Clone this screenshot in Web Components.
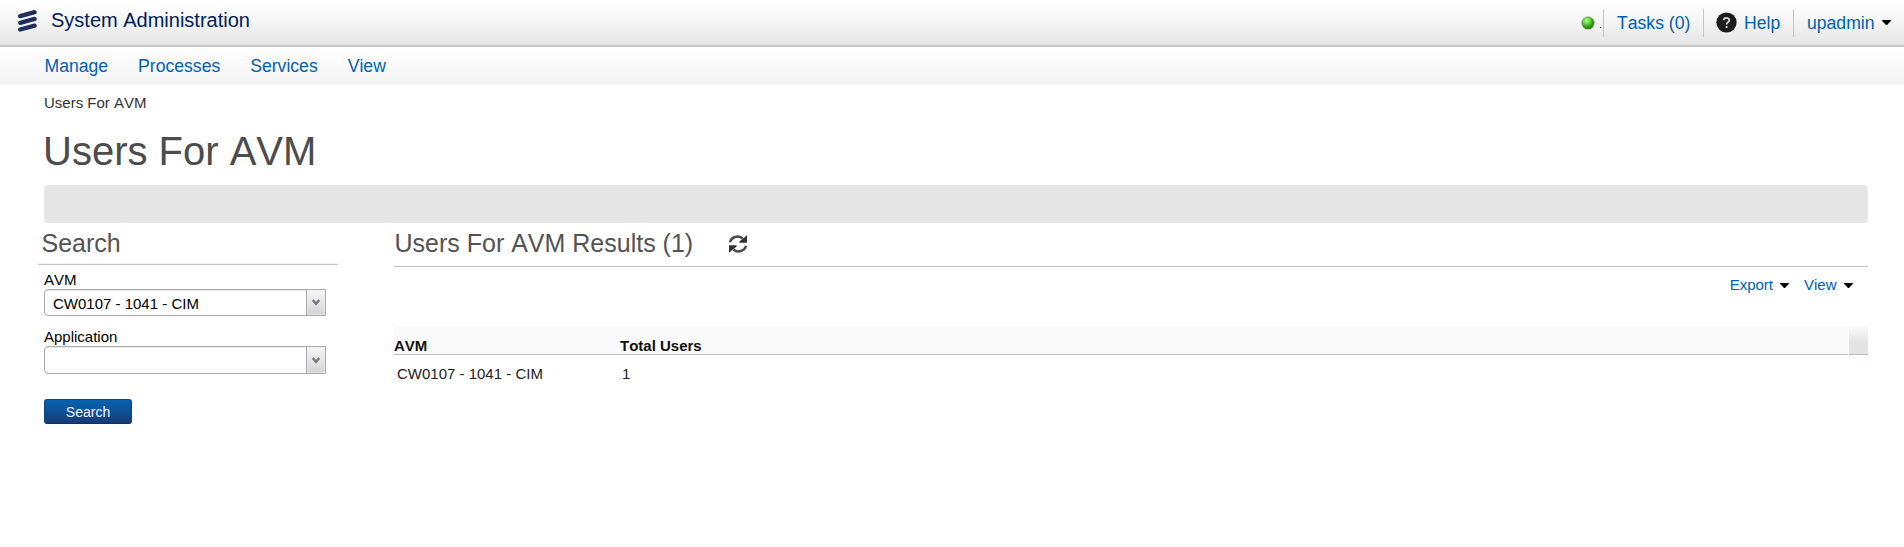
<!DOCTYPE html>
<html lang="en">
<head>
<meta charset="utf-8">
<title>Users For AVM</title>
<style>
html,body{margin:0;padding:0;background:#fff;height:100%;overflow:hidden}
body{font-family:"Liberation Sans",Arial,sans-serif;font-size:15px;color:#333;font-kerning:none}
</style>
</head>
<body>
<admin-page></admin-page>
<script>
const define = (name, html, setup) => customElements.define(name, class extends HTMLElement {
  connectedCallback() {
    if (this.shadowRoot) return;
    const t = document.createElement('template');
    t.innerHTML = html;
    this.attachShadow({mode: 'open'}).append(t.content.cloneNode(true));
    if (setup) setup(this, this.shadowRoot);
  }
});

define('menu-caret', `<style>:host{display:block;width:9px;height:5px;flex:none}svg{display:block}</style>
<svg width="9" height="5" viewBox="0 0 9 5"><path d="M0 0H9V.8L5 5H4L0 .8Z" fill="#000"/></svg>`);

define('brand-logo', `<style>:host{display:block;width:20px;height:23px;flex:none}svg{display:block}</style>
<svg width="20" height="23" viewBox="0 0 20 23" stroke="#20305c" stroke-width="4.3" stroke-linecap="round"><path d="M3.2 7.1L17.6 3.2M3.2 13.8L17.6 9.9M3.2 20.5L17.6 16.6"/></svg>`);

define('status-dot', `<style>:host{display:block;width:14px;height:14px;flex:none}svg{display:block}</style>
<svg width="14" height="14" viewBox="0 0 14 14"><defs><radialGradient id="g" cx=".4" cy=".32" r=".68"><stop offset="0" stop-color="#d4ffb5"/><stop offset=".3" stop-color="#72df49"/><stop offset=".7" stop-color="#2fa314"/><stop offset="1" stop-color="#21730f"/></radialGradient></defs><circle cx="7" cy="7" r="6.3" fill="url(#g)" stroke="#8ba484" stroke-width=".6"/></svg>`);

define('help-icon', `<style>:host{display:block;width:21px;height:21px;flex:none}svg{display:block}</style>
<svg width="21" height="21" viewBox="0 0 21 21"><circle cx="10.5" cy="10.5" r="10.1" fill="#1c1c1c"/><path d="M7.7 8.2C7.8 5.1 13.3 5.1 13.3 8.1C13.3 10.2 10.6 10.1 10.6 12.6" fill="none" stroke="#d5d5d5" stroke-width="1.8"/><rect x="9.6" y="14" width="2" height="2" fill="#d5d5d5"/></svg>`);

define('refresh-icon', `<style>:host{display:block;width:18px;height:18px;flex:none}svg{display:block}</style>
<svg width="18" height="18" viewBox="0 0 18 18"><path d="M1 7.3C2.2 1.8 9.4-.2 13.6 3.5" fill="none" stroke="#4a4a4a" stroke-width="2.5"/><path d="M18 .3V7.8H10.4V6.6Z" fill="#333"/><path d="M17 10.7C15.8 16.2 8.6 18.2 4.4 14.5" fill="none" stroke="#4a4a4a" stroke-width="2.5"/><path d="M0 17.7V10.2H7.6V11.4Z" fill="#333"/></svg>`);

define('app-header', `<style>
:host{display:flex;box-sizing:border-box;height:47px;border-bottom:2px solid #c8c8c8;background:linear-gradient(#fff,#fcfcfc 10px,#e5e5e5);justify-content:space-between}
.brand{display:flex;padding:8px 0 0 17px}
.title{font-size:20px;line-height:24px;color:#00205b;margin-left:14px}
brand-logo{margin-top:.5px}
.right{display:flex;padding-top:9px;height:28px;color:#0061b0;font-size:17.6px;line-height:28px;white-space:nowrap}
status-dot{margin:7px 4px 0 0}
.mark{font-size:11px;width:4px;color:#00205b;line-height:30px}
.cell{display:flex;box-sizing:border-box;border-left:1px solid #c5c5c5}
.tasks{width:100px;padding-left:13px}
.help{width:90px;padding-left:12px}
.help span{margin-left:7px}
.user{width:111px;padding-left:13px}
help-icon{margin-top:3px}
menu-caret{margin:11px 0 0 7px}
</style>
<div class="brand"><brand-logo></brand-logo><div class="title"><slot></slot></div></div>
<div class="right"><status-dot></status-dot><span class="mark">.</span>
<div class="cell tasks"><span>Tasks (0)</span></div>
<div class="cell help"><help-icon></help-icon><span>Help</span></div>
<div class="cell user"><span>upadmin</span><menu-caret></menu-caret></div></div>`);

define('nav-bar', `<style>:host{display:flex;gap:30px;height:38px;padding-left:44.5px;box-sizing:border-box;background:linear-gradient(#fff,#f3f3f3);color:#0061b0;font-size:17.6px;line-height:39px}</style>
<slot></slot>`);

define('section-title', `<style>:host{display:flex;box-sizing:border-box;border-bottom:1px solid #c6c6c6;box-shadow:inset 0 -1px #f4f4f4;color:#535353;font-size:25px;white-space:nowrap}</style><slot></slot>`);

define('combo-box', `<style>
:host{display:block;width:282px;color:#000}
.label{line-height:18px;font-size:15px}
.box{display:flex;box-sizing:border-box;height:var(--h,27px);border:1px solid #a9a9b0;border-radius:4px 0 0 4px;background:#fff;box-shadow:inset 0 1px #e8e8eb}
.value{flex:1;padding-left:8px;line-height:27px}
.btn{width:18px;border-left:1px solid #a9a9b0;background:linear-gradient(#f5f5f5,#e6e6e6 50%,#d3d3d3);box-shadow:inset 0 0 0 1px #efefef80;display:flex;align-items:center;justify-content:center}
svg{display:block}
</style><div class="label"></div><div class="box"><div class="value"><slot></slot></div><div class="btn"><svg width="8" height="7" viewBox="0 0 8 7"><path d="M.8 1L4 4.8L7.2 1" fill="none" stroke="#777" stroke-width="2.4"/></svg></div></div>`,
(el, root) => root.querySelector('.label').textContent = el.getAttribute('label'));

define('action-button', `<style>:host{display:block;box-sizing:border-box;width:88px;height:25px;border:1px solid #0b4787;border-bottom-color:#12305f;border-radius:3px;background:linear-gradient(#0562ad,#0c549a 45%,#183a73);box-shadow:inset 1px 0 #0d458180,inset -1px 0 #0d458180;color:#f2f5fa;font-size:14px;line-height:25px;text-align:center}</style><slot></slot>`);

define('search-panel', `<style>
:host{display:block;width:300px}
section-title{height:42px;padding-left:3.5px;line-height:41px}
.form{padding:6px 0 0 6px}
.second{margin-top:12px;--h:28px}
action-button{margin-top:25px}
</style>
<section-title>Search</section-title>
<div class="form"><combo-box label="AVM">CW0107 - 1041 - CIM</combo-box>
<combo-box class="second" label="Application"></combo-box>
<action-button>Search</action-button></div>`);

define('results-table', `<style>
:host{display:block;color:#222}
.head,.row{display:grid;grid-template-columns:226px 1fr 20px}
.head{height:28px;font-weight:bold;color:#111;line-height:38px}
.head>div{box-sizing:border-box;height:28px;background:#fafafa;border-bottom:1px solid #b7c0cd}
.head .corner{margin-left:1px;border-bottom-color:#b7bfca;background:linear-gradient(#fafafa,#e4e4e4 55%,#e3e3e3)}
.row{line-height:38px}.row>div{padding-left:3px}.row>div+div{padding-left:2px}
</style>
<div class="head"><div>AVM</div><div>Total Users</div><div class="corner"></div></div>
<div class="row"><div>CW0107 - 1041 - CIM</div><div>1</div></div>`);

define('results-panel', `<style>
:host{display:block;width:1474px}
section-title{height:44px;line-height:41px;padding-left:.5px}
refresh-icon{margin:12px 0 0 36px}
.tools{display:flex;justify-content:flex-end;height:60px;box-sizing:border-box;padding-right:15px;color:#0061b0;line-height:36px}
menu-caret{margin:16px 0 0 7.5px}
.tools span+menu-caret+span{margin-left:14.5px}
</style>
<section-title><span>Users For AVM Results (1)</span><refresh-icon></refresh-icon></section-title>
<div class="tools"><span>Export</span><menu-caret></menu-caret><span>View</span><menu-caret></menu-caret></div>
<results-table></results-table>`);

define('admin-page', `<style>
:host{display:block}
.crumb{padding-left:44px;height:35px;line-height:36px}
h1{margin:0;padding-left:43px;height:65px;font-size:40px;line-height:62px;font-weight:normal;color:#4c4c4c}
.bar{height:38px;margin:0 36px 0 44px;border-radius:4px;background:#e5e5e5;box-sizing:border-box;border:1px solid #e9e9e9}
.cols{display:flex;gap:56px;padding-left:38px}
</style>
<app-header>System Administration</app-header>
<nav-bar><span>Manage</span><span>Processes</span><span>Services</span><span>View</span></nav-bar>
<div class="crumb">Users For AVM</div><h1>Users For AVM</h1><div class="bar"></div>
<div class="cols"><search-panel></search-panel><results-panel></results-panel></div>`);
</script>
</body>
</html>
